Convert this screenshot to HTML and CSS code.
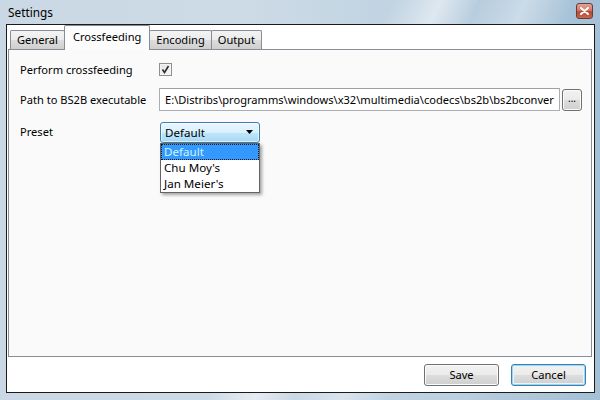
FILE: index.html
```html
<!DOCTYPE html>
<html>
<head>
<meta charset="utf-8">
<link rel="stylesheet" href="styles.css">
</head>
<body>
<div class="window">
  <div class="titlebar">
    <span class="title">Settings</span>
    <span class="close"><svg width="9" height="8" viewBox="0 0 9 8"><path d="M1 1 L8 7 M8 1 L1 7" stroke="#fff" stroke-width="2" stroke-linecap="round"/></svg></span>
  </div>
  <div class="client">
    <div class="tabs">
      <div class="tabstrip">
        <div class="tab">General</div>
        <div class="tab selected">Crossfeeding</div>
        <div class="tab">Encoding</div>
        <div class="tab">Output</div>
      </div>
      <div class="panel">
        <div class="row row1">
          <div class="label">Perform crossfeeding</div>
          <div class="checkbox"><svg width="9" height="9" viewBox="0 0 9 9"><path d="M1.5 4.5 L3.5 7.5 L7.5 1" fill="none" stroke="#2d2d2d" stroke-width="1.6"/></svg></div>
        </div>
        <div class="row row2">
          <div class="label">Path to BS2B executable</div>
          <div class="textbox">E:\Distribs\programms\windows\x32\multimedia\codecs\bs2b\bs2bconver</div>
          <div class="browse">...</div>
        </div>
        <div class="row row3">
          <div class="label">Preset</div>
          <div class="combo-wrap">
            <div class="combo"><span>Default</span><svg class="arrow" width="7" height="4" viewBox="0 0 7 4"><path d="M0 0 H7 L3.5 4 Z" fill="#000"/></svg></div>
            <div class="dropdown">
              <div class="item active">Default</div>
              <div class="item">Chu Moy's</div>
              <div class="item">Jan Meier's</div>
            </div>
          </div>
        </div>
      </div>
    </div>
    <div class="buttons">
      <div class="btn">Save</div>
      <div class="btn default">Cancel</div>
    </div>
  </div>
</div>
</body>
</html>
```

FILE: styles.css
```css
html, body {
  margin: 0;
  padding: 0;
}
body {
  width: 600px;
  height: 400px;
  overflow: hidden;
  font-family: "Segoe UI", "Noto Sans", "Open Sans", sans-serif;
  font-size: 11.1px;
  color: #000;
}
.window {
  width: 600px;
  height: 400px;
  box-sizing: border-box;
  padding: 0 5px 7px 6px;
  display: flex;
  flex-direction: column;
  background:
    linear-gradient(115deg, rgba(255,255,255,0) 50%, rgba(255,255,255,0.5) 56%, rgba(255,255,255,0) 61%, rgba(255,255,255,0.35) 67%, rgba(255,255,255,0) 73%),
    linear-gradient(90deg, #c9d8e4 0%, #cddbe6 40%, #bcd0e0 75%, #a3c0d6 100%);
}
.titlebar {
  height: 24px;
  flex: none;
  display: flex;
  align-items: center;
  justify-content: space-between;
  padding: 0 1px 0 2px;
}
.title {
  font-size: 11.8px;
  margin-top: -1px;
}
.close {
  width: 15px;
  height: 14px;
  margin-top: -3px;
  margin-right: 1px;
  border: 1px solid #6b3b36;
  border-radius: 3px;
  background: linear-gradient(#e2a394 0%, #d07a68 45%, #b84830 55%, #c8664d 100%);
  display: flex;
  align-items: center;
  justify-content: center;
}
.client {
  flex: 1;
  border: 1px solid #1b1b1b;
  background: #fff;
  display: flex;
  flex-direction: column;
  padding: 0 0 0 1px;
}
.tabs {
  display: flex;
  flex-direction: column;
  height: 332px;
  margin-right: 2px;
}
.tabstrip {
  display: flex;
  height: 24px;
  align-items: flex-end;
  padding-left: 2px;
  position: relative;
  z-index: 1;
}
.tab {
  height: 19px;
  line-height: 18px;
  box-sizing: border-box;
  padding: 0 6px;
  border: 1px solid #898c95;
  border-bottom: none;
  border-radius: 2px 2px 0 0;
  background: linear-gradient(#f3f3f3 0%, #ebebeb 50%, #dddddd 51%, #cfcfcf 100%);
  margin-right: -1px;
}
.tab.selected {
  padding: 0 8px 0 8px;
  line-height: 21px;
  background: #fcfcfc;
  margin-bottom: -1px;
  height: 25px;
  position: relative;
}
.panel {
  flex: 1;
  border: 1px solid #898c95;
  background: #fafafa;
  padding: 11px 0 0 11px;
  display: flex;
  flex-direction: column;
}
.row {
  display: flex;
  align-items: center;
}
.label {
  width: 139px;
  flex: none;
}
.row1 {
  height: 16px;
}
.row2 {
  margin-top: 11px;
  height: 23px;
}
.row3 {
  margin-top: 11px;
  height: 22px;
  align-items: flex-start;
}
.row3 .label {
  line-height: 20px;
}
.checkbox {
  width: 11px;
  height: 11px;
  border: 1px solid #8e8f8f;
  background: linear-gradient(135deg, #e4e4e4, #f7f7f7);
  box-shadow: inset 0 0 0 1px #f4f4f4;
  display: flex;
  align-items: center;
  justify-content: center;
}
.textbox {
  width: 401px;
  height: 23px;
  box-sizing: border-box;
  border: 1px solid #abadb3;
  border-top-color: #9ea0a8;
  background: #fff;
  padding: 0 0 0 5px;
  line-height: 21px;
  white-space: nowrap;
  overflow: hidden;
  flex: none;
}
.browse {
  width: 20px;
  height: 22px;
  box-sizing: border-box;
  margin-left: 2px;
  border: 1px solid #707070;
  border-radius: 3px;
  background: linear-gradient(#f2f2f2 0%, #ebebeb 50%, #dddddd 51%, #cfcfcf 100%);
  box-shadow: inset 0 0 0 1px #fcfcfc;
  text-align: center;
  line-height: 16px;
  font-size: 10px;
  flex: none;
}
.combo-wrap {
  position: relative;
  margin-left: 1px;
}
.combo {
  width: 100px;
  height: 21px;
  box-sizing: border-box;
  border: 1px solid #3c7fb1;
  border-radius: 3px;
  background: linear-gradient(#eaf6fd 0%, #d9f0fc 50%, #bee6fd 51%, #a7d9f5 100%);
  box-shadow: inset 0 0 0 1px rgba(255,255,255,0.6);
  display: flex;
  align-items: center;
  justify-content: space-between;
  padding: 0 6px 0 4px;
  font-size: 11.6px;
}
.combo span {
  margin-top: -1px;
}
.arrow {
  margin-top: -2px;
}
.dropdown {
  position: absolute;
  left: 0;
  top: 21px;
  width: 100px;
  box-sizing: border-box;
  border: 1px solid #646464;
  background: #fff;
  box-shadow: 2px 2px 3px rgba(0,0,0,0.35);
  font-size: 11.6px;
}
.item {
  height: 16px;
  line-height: 15px;
  padding-left: 3px;
}
.item.active {
  background: #3399ff;
  color: #cdf5ff;
  outline: 1px dotted #1a1a1a;
  outline-offset: -1px;
}
.buttons {
  flex: 1;
  display: flex;
  justify-content: flex-end;
  align-items: flex-start;
  padding-top: 7px;
  padding-right: 8px;
  gap: 12px;
}
.btn {
  width: 75px;
  height: 22px;
  box-sizing: border-box;
  border: 1px solid #707070;
  border-radius: 3px;
  background: linear-gradient(#f2f2f2 0%, #ebebeb 50%, #dddddd 51%, #cfcfcf 100%);
  box-shadow: inset 0 0 0 1px #fcfcfc;
  text-align: center;
  line-height: 19px;
}
.btn.default {
  border-color: #3c7fb1;
  box-shadow: inset 0 0 0 1px #9fd4f0, inset 0 0 0 2px #e6f5fc;
}
```
